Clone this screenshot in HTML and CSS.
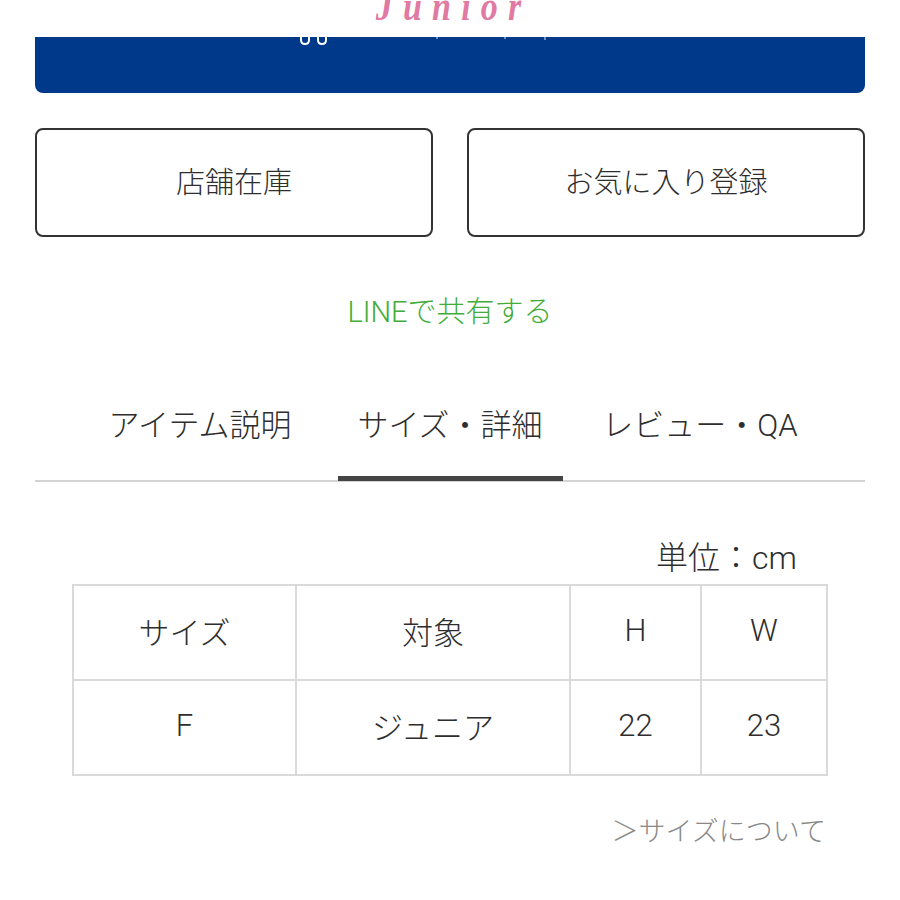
FILE: index.html
```html
<!DOCTYPE html>
<html lang="ja">
<head>
<meta charset="utf-8">
<title>サイズ・詳細</title>
<link rel="stylesheet" href="styles.css">
</head>
<body>
<div class="page">
  <div class="brand"><span class="brand-text">Junior</span></div>
  <div class="banner">
    <svg class="banner-marks" width="300" height="10" viewBox="0 0 300 10">
      <path d="M1 0 V3 Q1 7 5 7 Q9 7 9 3 V0" fill="none" stroke="#fff" stroke-width="2"/>
      <path d="M18 0 V3 Q18 7 22 7 Q26 7 26 3 V0" fill="none" stroke="#fff" stroke-width="2"/>
      <path d="M137 0 V2" stroke="#fff" stroke-width="1.5" opacity="0.6"/>
      <path d="M205 0 V2" stroke="#fff" stroke-width="1.5" opacity="0.6"/>
      <path d="M245 0 V3" stroke="#fff" stroke-width="1.5" opacity="0.6"/>
    </svg>
  </div>
  <div class="actions">
    <button class="action-btn">店舗在庫</button>
    <button class="action-btn">お気に入り登録</button>
  </div>
  <div class="share"><a class="share-link">LINEで共有する</a></div>
  <div class="tabs">
    <div class="tab">アイテム説明</div>
    <div class="tab active">サイズ・詳細</div>
    <div class="tab">レビュー・QA</div>
  </div>
  <div class="unit">単位：cm</div>
  <div class="size-table">
    <div class="cell">サイズ</div>
    <div class="cell">対象</div>
    <div class="cell">H</div>
    <div class="cell">W</div>
    <div class="cell">F</div>
    <div class="cell">ジュニア</div>
    <div class="cell">22</div>
    <div class="cell">23</div>
  </div>
  <div class="size-guide"><a class="size-guide-link">＞サイズについて</a></div>
</div>
</body>
</html>
```
FILE: styles.css
```css
* { box-sizing: border-box; }
html, body { margin: 0; padding: 0; background: #fff; }
body {
  font-family: Roboto, "Noto Sans CJK JP", "Noto Sans", sans-serif;
  font-weight: 300;
  color: #2e2e2e;
}
.page {
  width: 900px;
  height: 900px;
  padding: 0 35px;
  overflow: hidden;
}
.brand {
  height: 37px;
  overflow: hidden;
  display: flex;
  justify-content: center;
}
.brand-text {
  font-family: "Liberation Serif", serif;
  font-style: italic;
  font-weight: bold;
  font-size: 40px;
  line-height: 40px;
  letter-spacing: 12px;
  color: #e07aa3;
  margin-top: -13px;
  margin-left: 8px;
  display: inline-block;
  transform: scaleX(0.85);
}
.banner {
  position: relative;
  height: 56px;
  background: #00388a;
  border-radius: 0 0 8px 8px;
}
.banner-marks {
  position: absolute;
  left: 265px;
  top: 0;
}
.actions {
  margin-top: 35px;
  display: flex;
  gap: 34px;
}
.action-btn {
  flex: 1;
  height: 109px;
  border: 2px solid #333;
  border-radius: 8px;
  background: #fff;
  font-family: Roboto, "Noto Sans CJK JP", sans-serif;
  font-weight: 300;
  font-size: 29px;
  color: #2e2e2e;
  padding: 0 0 6px;
}
.share {
  margin-top: 55px;
  text-align: center;
  font-size: 29px;
  line-height: 40px;
  height: 40px;
}
.share-link {
  color: #41ad38;
}
.tabs {
  margin-top: 74px;
  display: flex;
  justify-content: center;
  gap: 25px;
  border-bottom: 2px solid #d4d4d4;
}
.tab {
  width: 225px;
  text-align: center;
  font-size: 31px;
  line-height: 40px;
  padding-bottom: 30px;
  border-bottom: 5px solid transparent;
  margin-bottom: -1px;
}
.tab.active {
  border-bottom-color: #444;
}
.unit {
  margin-top: 56px;
  text-align: right;
  padding-right: 68px;
  font-size: 32px;
  line-height: 40px;
  height: 40px;
}
.size-table {
  margin: 6px auto 0;
  width: 756px;
  display: grid;
  grid-template-columns: 221px 272px 129px 124px;
  grid-auto-rows: 93px;
  gap: 2px;
  padding: 2px;
  background: #dadada;
}
.cell {
  background: #fff;
  display: flex;
  align-items: center;
  justify-content: center;
  font-size: 31px;
  padding-bottom: 4px;
}
.size-guide {
  margin-top: 38px;
  text-align: right;
  padding-right: 39px;
  font-size: 27px;
  line-height: 36px;
  height: 36px;
}
.size-guide-link {
  color: #888;
}
```
